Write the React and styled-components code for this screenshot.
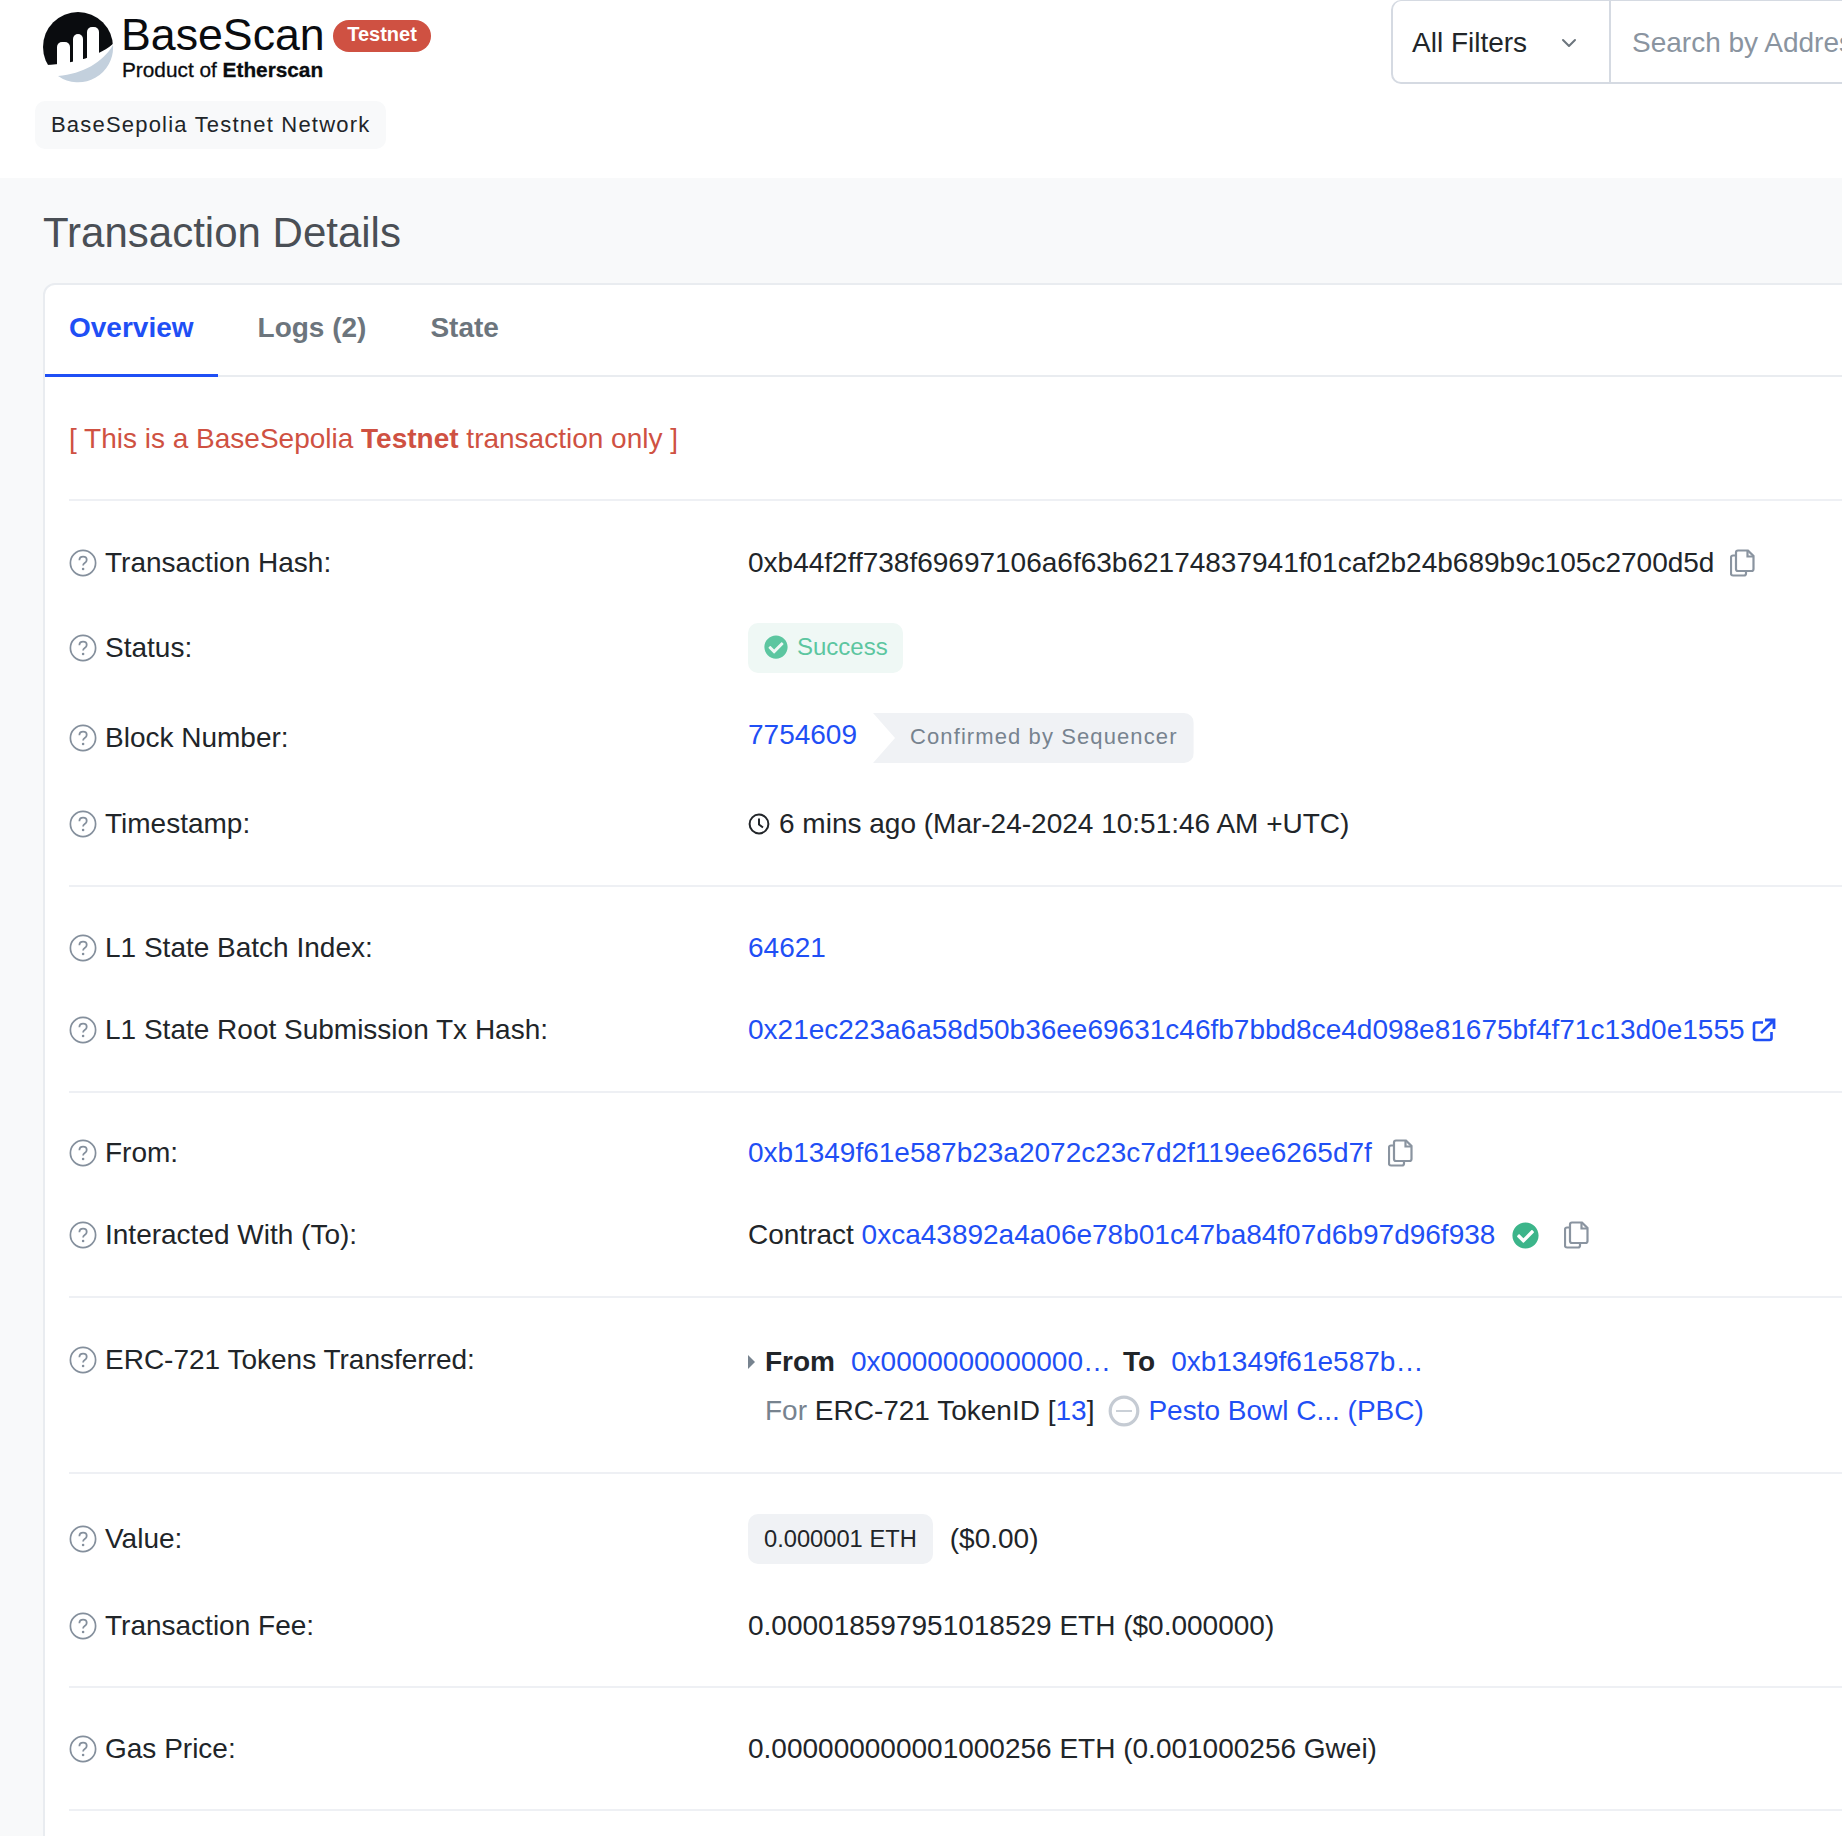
import React from "react";
import styled, { createGlobalStyle } from "styled-components";
import { FaCheckCircle } from "react-icons/fa";
import { ChevronDown } from "lucide-react";

const GlobalStyle = createGlobalStyle`
  html, body {
    margin: 0;
    padding: 0;
    background: #f8f9fa;
    overflow: hidden;
  }
  body {
    font-family: "Liberation Sans", Arial, sans-serif;
    color: #212529;
  }
  #root {
    width: 1842px;
    height: 1836px;
    overflow: hidden;
  }
`;

const HelpIcon = () => (
  <HelpSvg viewBox="0 0 28 28">
    <circle cx="14" cy="14" r="12.6" fill="none" stroke="#848f9c" strokeWidth="1.7" />
    <path
      d="M10.4 11.2c0-2.2 1.6-3.5 3.7-3.5s3.6 1.3 3.6 3.2c0 1.5-.8 2.3-2 3.1-1.1.7-1.6 1.2-1.6 2.5"
      fill="none"
      stroke="#848f9c"
      strokeWidth="1.8"
    />
    <circle cx="14.1" cy="20" r="1.3" fill="#848f9c" />
  </HelpSvg>
);

const CopyIcon = () => (
  <CopySvg viewBox="0 0 25 28">
    <path
      d="M8 1.5h10l5.5 5.5v13a2 2 0 0 1-2 2H8a2 2 0 0 1-2-2V3.5a2 2 0 0 1 2-2z"
      fill="none"
      stroke="#8a94a0"
      strokeWidth="2.2"
    />
    <path d="M17.5 1.5V7.5h6" fill="none" stroke="#8a94a0" strokeWidth="2.2" />
    <path
      d="M6 6.5H3a2 2 0 0 0-2 2V24.500a2 2 0 0 0 2 2h11a2 2 0 0 0 2-2V22"
      fill="none"
      stroke="#8a94a0"
      strokeWidth="2.2"
    />
  </CopySvg>
);

const ClockIcon = () => (
  <svg width="22" height="22" viewBox="0 0 22 22">
    <circle cx="11" cy="11" r="9.4" fill="none" stroke="#212529" strokeWidth="2" />
    <path d="M11 5.500V11.500l4 3" fill="none" stroke="#212529" strokeWidth="2" />
  </svg>
);

const ExternalIcon = () => (
  <ExternalSvg viewBox="0 0 24 24">
    <path
      d="M11 4.500H4a2 2 0 0 0-2 2V20a2 2 0 0 0 2 2h13.500a2 2 0 0 0 2-2v-6"
      fill="none"
      stroke="#1f4ff5"
      strokeWidth="2.6"
    />
    <path d="M9 15 21 3M13 2h9v9" fill="none" stroke="#1f4ff5" strokeWidth="2.8" />
  </ExternalSvg>
);

const TokenIcon = () => (
  <svg width="32" height="32" viewBox="0 0 32 32">
    <circle cx="16" cy="16" r="13.800" fill="none" stroke="#c5cbd3" strokeWidth="3.200" />
    <path d="M8 16h16" stroke="#c5cbd3" strokeWidth="1.800" />
  </svg>
);

const Logo = () => (
  <svg width="72" height="72" viewBox="0 0 72 72">
    <circle cx="35" cy="35" r="35" fill="#0a0c0f" />
    <path d="M72 30C58 44 30 52 3 53V72H72Z" fill="#fff" />
    <path d="M70 33A35 35 0 0 1 15 64C40 62 60 50 70 33Z" fill="#c3d0dd" />
    <path d="M14 56V35a5 5 0 0 1 5-5h3a5 5 0 0 1 5 5V56Z" fill="#fff" />
    <path d="M30 52V27a5 5 0 0 1 5-5h0a5 5 0 0 1 5 5V52Z" fill="#fff" />
    <path d="M44 48V20a5 5 0 0 1 5-5h2a5 5 0 0 1 5 5V42Z" fill="#fff" />
  </svg>
);

const Label = ({ children }) => (
  <LabelCell>
    <HelpIcon />
    <span>{children}</span>
  </LabelCell>
);

export default function App() {
  return (
    <>
      <GlobalStyle />
      <Header>
        <Brand>
          <LogoRow>
            <Logo />
            <LogoText>
              <BrandName>BaseScan</BrandName>
              <BrandSub>
                Product of <b>Etherscan</b>
              </BrandSub>
            </LogoText>
            <TestnetBadge>Testnet</TestnetBadge>
          </LogoRow>
          <NetworkBadge>BaseSepolia Testnet Network</NetworkBadge>
        </Brand>
        <SearchBox>
          <FilterButton>
            All Filters
            <ChevronDown size={24} color="#6c757d" strokeWidth={2} />
          </FilterButton>
          <SearchText>Search by Address / Txn Hash / Block / Token</SearchText>
        </SearchBox>
      </Header>

      <Main>
        <PageTitle>Transaction Details</PageTitle>
        <Card>
          <Tabs>
            <Tab $active>Overview</Tab>
            <Tab>Logs (2)</Tab>
            <Tab>State</Tab>
          </Tabs>
          <Body>
            <Notice>
              [ This is a BaseSepolia <b>Testnet</b> transaction only ]
            </Notice>

            <Section>
              <Row $mt={42}>
                <Label>Transaction Hash:</Label>
                <Value>
                  0xb44f2ff738f69697106a6f63b62174837941f01caf2b24b689b9c105c2700d5d
                  <CopyIcon />
                </Value>
              </Row>
              <Row $mt={40} $h={50}>
                <Label>Status:</Label>
                <Value>
                  <StatusBadge>
                    <FaCheckCircle size={24} color="#5cc6a0" />
                    Success
                  </StatusBadge>
                </Value>
              </Row>
              <Row $mt={40} $h={50}>
                <Label>Block Number:</Label>
                <Value>
                  <BlockLink>7754609</BlockLink>
                  <SequencerBadge>Confirmed by Sequencer</SequencerBadge>
                </Value>
              </Row>
              <Row $mt={41}>
                <Label>Timestamp:</Label>
                <Value $gap={9}>
                  <ClockIcon />6 mins ago (Mar-24-2024 10:51:46 AM +UTC)
                </Value>
              </Row>
            </Section>

            <Section>
              <Row $mt={41}>
                <Label>L1 State Batch Index:</Label>
                <Value>
                  <Link>64621</Link>
                </Value>
              </Row>
              <Row $mt={42}>
                <Label>L1 State Root Submission Tx Hash:</Label>
                <Value $gap={7}>
                  <Link>0x21ec223a6a58d50b36ee69631c46fb7bbd8ce4d098e81675bf4f71c13d0e1555</Link>
                  <ExternalIcon />
                </Value>
              </Row>
            </Section>

            <Section>
              <Row $mt={40}>
                <Label>From:</Label>
                <Value>
                  <Link>0xb1349f61e587b23a2072c23c7d2f119ee6265d7f</Link>
                  <CopyIcon />
                </Value>
              </Row>
              <Row $mt={42}>
                <Label>Interacted With (To):</Label>
                <Value $gap={0}>
                  Contract&nbsp;
                  <Link>0xca43892a4a06e78b01c47ba84f07d6b97d96f938</Link>
                  <VerifiedIcon>
                    <FaCheckCircle size={27} color="#3cb58a" />
                  </VerifiedIcon>
                  <CopyIcon />
                </Value>
              </Row>
            </Section>

            <Section $pb={42}>
              <TransferRow>
                <TransferLabel>
                  <Label>ERC-721 Tokens Transferred:</Label>
                </TransferLabel>
                <TransferLines>
                  <TransferLine>
                    <Caret />
                    <b>From</b>
                    <Link>0x0000000000000…</Link>
                    <ToWord>To</ToWord>
                    <Link>0xb1349f61e587b…</Link>
                  </TransferLine>
                  <TransferDetail>
                    <Muted>For</Muted>&nbsp;ERC-721 TokenID [<Link>13</Link>]
                    <TokenSpacer>
                      <TokenIcon />
                    </TokenSpacer>
                    <Link>Pesto Bowl C... (PBC)</Link>
                  </TransferDetail>
                </TransferLines>
              </TransferRow>
            </Section>

            <Section $pb={40}>
              <Row $mt={40} $h={50}>
                <Label>Value:</Label>
                <Value>
                  <AmountBadge>0.000001 ETH</AmountBadge>
                  ($0.00)
                </Value>
              </Row>
              <Row $mt={42}>
                <Label>Transaction Fee:</Label>
                <Value>0.000018597951018529 ETH ($0.000000)</Value>
              </Row>
            </Section>

            <Section $pb={40}>
              <Row $mt={41}>
                <Label>Gas Price:</Label>
                <Value>0.000000000001000256 ETH (0.001000256 Gwei)</Value>
              </Row>
            </Section>
          </Body>
        </Card>
      </Main>
    </>
  );
}

const Header = styled.header`
  display: flex;
  height: 178px;
  background: #fff;
  padding-left: 35px;
  overflow: hidden;
`;

const Brand = styled.div`
  flex: 0 0 1356px;
`;

const LogoRow = styled.div`
  display: flex;
  align-items: flex-start;
  height: 101px;
  padding: 12px 0 0 8px;
  box-sizing: border-box;
`;

const LogoText = styled.div`
  margin-left: 6px;
  width: 212px;
`;

const BrandName = styled.div`
  font-size: 44.7px;
  line-height: 46px;
  color: #0a0c0f;
`;

const BrandSub = styled.div`
  font-size: 20.8px;
  line-height: 24px;
  margin-left: 1px;
  color: #0a0c0f;
  -webkit-text-stroke: 0.3px #0a0c0f;
`;

const TestnetBadge = styled.span`
  display: flex;
  align-items: center;
  justify-content: center;
  width: 98px;
  height: 32px;
  margin-top: 8px;
  padding-bottom: 3px;
  box-sizing: border-box;
  border-radius: 16px;
  background: #cf5142;
  color: #fff;
  font-size: 20px;
  font-weight: 700;
`;

const NetworkBadge = styled.div`
  display: inline-flex;
  align-items: center;
  height: 48px;
  padding: 0 16px;
  border-radius: 10px;
  background: #f8f9fa;
  font-size: 22px;
  letter-spacing: 1.2px;
`;

const SearchBox = styled.div`
  flex: 0 0 700px;
  display: flex;
  height: 84px;
  box-sizing: border-box;
  border: 2px solid #d5dae2;
  border-top-width: 1px;
  border-radius: 10px;
  font-size: 28px;
`;

const FilterButton = styled.div`
  flex: 0 0 218px;
  display: flex;
  align-items: center;
  justify-content: space-between;
  box-sizing: border-box;
  padding: 3px 28px 0 19px;
  border-right: 2px solid #d5dae2;
`;

const SearchText = styled.div`
  display: flex;
  align-items: center;
  padding: 3px 0 0 21px;
  color: #8a94a0;
  white-space: nowrap;
`;

const Main = styled.main`
  padding: 0 0 0 43px;
  background: #f8f9fa;
`;

const PageTitle = styled.h1`
  margin: 0;
  height: 105px;
  display: flex;
  align-items: center;
  padding-top: 5px;
  box-sizing: border-box;
  font-size: 42px;
  font-weight: 400;
  color: #4a4f55;
`;

const Card = styled.section`
  width: 2000px;
  min-height: 1700px;
  box-sizing: border-box;
  background: #fff;
  border: 2px solid #e9ecf0;
  border-radius: 12px;
`;

const Tabs = styled.nav`
  display: flex;
  gap: 16px;
  height: 92px;
  box-sizing: border-box;
  border-bottom: 2px solid #e9ecf0;
`;

const Tab = styled.div`
  display: flex;
  align-items: center;
  height: 92px;
  box-sizing: border-box;
  padding: 0 24px 4px 24px;
  font-size: 28px;
  font-weight: 700;
  color: ${(p) => (p.$active ? "#1f4ff5" : "#6c757d")};
  border-bottom: 3px solid ${(p) => (p.$active ? "#1f4ff5" : "transparent")};
`;

const Body = styled.div`
  padding-left: 24px;
`;

const Notice = styled.div`
  height: 124px;
  display: flex;
  align-items: center;
  padding-top: 2px;
  white-space: pre;
  box-sizing: border-box;
  border-bottom: 2px solid #eef0f4;
  font-size: 28px;
  color: #cf5142;
`;

const Section = styled.div`
  padding-bottom: ${(p) => p.$pb || 41}px;
  border-bottom: 2px solid #eef0f4;
`;

const Row = styled.div`
  display: grid;
  grid-template-columns: 679px 1fr;
  align-items: center;
  height: ${(p) => p.$h || 40}px;
  margin-top: ${(p) => p.$mt || 0}px;
  font-size: 28px;
`;

const LabelCell = styled.div`
  display: flex;
  align-items: center;
  gap: 8px;
`;

const HelpSvg = styled.svg`
  width: 28px;
  height: 28px;
  flex: none;
`;

const Value = styled.div`
  display: flex;
  align-items: center;
  gap: ${(p) => (p.$gap === undefined ? 16 : p.$gap)}px;
  white-space: nowrap;
`;

const CopySvg = styled.svg`
  width: 25px;
  height: 28px;
  flex: none;
`;

const ExternalSvg = styled.svg`
  width: 24px;
  height: 24px;
  flex: none;
`;

const Link = styled.span`
  color: #1f4ff5;
`;

const BlockLink = styled(Link)`
  margin-bottom: 6px;
`;

const Muted = styled.span`
  color: #77838f;
`;

const StatusBadge = styled.span`
  display: inline-flex;
  align-items: center;
  gap: 9px;
  height: 50px;
  padding: 0 15px 2px 16px;
  box-sizing: border-box;
  border-radius: 10px;
  background: #eff8f5;
  color: #5cc6a0;
  font-size: 24px;
`;

const SequencerBadge = styled.span`
  display: inline-flex;
  align-items: center;
  height: 50px;
  padding: 0 16px 2px 37px;
  box-sizing: border-box;
  border-radius: 0 10px 10px 0;
  background: #f0f2f5;
  color: #77838f;
  font-size: 22px;
  letter-spacing: 1.1px;
  clip-path: polygon(0 0, 100% 0, 100% 100%, 0 100%, 22px 50%);
`;

const VerifiedIcon = styled.span`
  display: inline-flex;
  margin: 0 25px 0 17px;
`;

const TransferRow = styled(Row)`
  height: 92px;
  margin-top: 40px;
  align-items: start;
`;

const TransferLabel = styled.div`
  margin-top: 6px;
`;

const TransferLines = styled.div`
  display: flex;
  flex-direction: column;
  gap: 9px;
  padding-top: 4px;
`;

const TransferLine = styled.div`
  display: flex;
  align-items: center;
  height: 40px;
  gap: 16px;
  white-space: nowrap;
`;

const ToWord = styled.b`
  margin-left: -4px;
`;

const TransferDetail = styled.div`
  display: flex;
  align-items: center;
  height: 40px;
  padding-left: 17px;
  white-space: nowrap;
`;

const TokenSpacer = styled.span`
  display: inline-flex;
  margin: 0 8px 0 14px;
`;

const Caret = styled.span`
  width: 0;
  height: 0;
  margin-right: -6px;
  border-left: 7px solid #77838f;
  border-top: 7px solid transparent;
  border-bottom: 7px solid transparent;
`;

const AmountBadge = styled.span`
  display: inline-flex;
  align-items: center;
  height: 50px;
  padding: 0 16px;
  margin-right: 1px;
  border-radius: 10px;
  background: #f0f2f5;
  font-size: 23.7px;
`;
